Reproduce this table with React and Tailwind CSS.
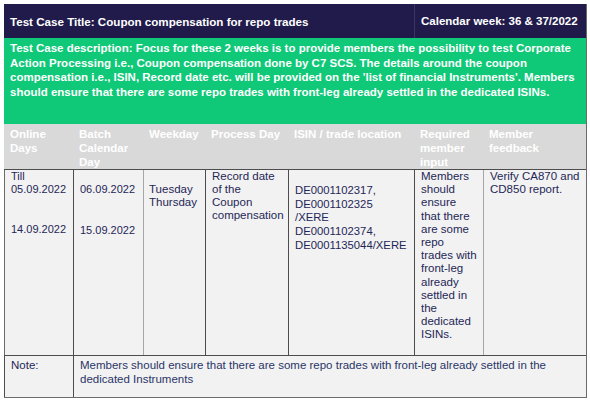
export default function App() {
  const headers = [
    ['Online', 'Days'],
    ['Batch', 'Calendar', 'Day'],
    ['Weekday'],
    ['Process Day'],
    ['ISIN / trade location'],
    ['Required', 'member', 'input'],
    ['Member', 'feedback'],
  ];

  const lines = (arr) => arr.map((l, i) => <div key={i}>{l}</div>);

  return (
    <div
      className="w-[590px] h-[401px] bg-white pt-[4px] pl-[4px]"
      style={{ fontFamily: '"Liberation Sans", Arial, sans-serif' }}
    >
      <div className="w-[583px] border-r border-b border-[#6b6b6b] grid grid-cols-[69px_70px_62px_83px_126px_69px_103px] text-[11.5px]">
        {/* title row */}
        <div className="col-span-5 h-[34px] bg-[#211b4c] text-white font-bold text-[11.6px] flex items-center pl-[6px] pt-[2px]">
          Test Case Title: Coupon compensation for repo trades
        </div>
        <div className="col-span-2 h-[34px] bg-[#211b4c] text-white font-bold text-[11.5px] flex items-center pl-[6px] pt-[2px] border-l border-[#3a3566]">
          Calendar week: 36 &amp; 37/2022
        </div>

        {/* description */}
        <div className="col-span-7 h-[86px] bg-[#0fc878] text-white font-bold text-[11.5px] leading-[14.5px] px-[6px] pt-[3px] whitespace-nowrap">
          {lines([
            'Test Case description: Focus for these 2 weeks is to provide members the possibility to test Corporate',
            'Action Processing i.e., Coupon compensation done by C7 SCS. The details around the coupon',
            "compensation i.e., ISIN, Record date etc. will be provided on the 'list of financial Instruments'. Members",
            'should ensure that there are some repo trades with front-leg already settled in the dedicated ISINs.',
          ])}
        </div>

        {/* header */}
        {headers.map((h) => (
          <div
            key={h.join(' ')}
            className="h-[46px] bg-[#d9d9d9] text-white font-bold leading-[14px] px-[6px] pt-[3px] border-b border-[#4d4d4d] whitespace-nowrap"
          >
            {lines(h)}
          </div>
        ))}

        {/* data row */}
        <div className="h-[185px] bg-[#f2f2f2] text-[#1f2757] text-[11px] leading-[13px] pl-[6px] border-l border-[#6b6b6b]">
          <div>Till</div>
          <div>05.09.2022</div>
          <div className="mt-[27px]">14.09.2022</div>
        </div>
        <div className="h-[185px] bg-[#f2f2f2] text-[#1f2757] text-[11px] leading-[13px] pl-[6px] pt-[13px] border-l border-[#4d4d4d]">
          <div>06.09.2022</div>
          <div className="mt-[28px]">15.09.2022</div>
        </div>
        <div className="h-[185px] bg-[#f2f2f2] text-[#1f2757] leading-[13px] pl-[5px] pt-[13px] border-l border-[#a6a6a6]">
          {lines(['Tuesday', 'Thursday'])}
        </div>
        <div className="h-[185px] bg-[#f2f2f2] text-[#1f2757] leading-[13px] pl-[6px] border-l border-[#4d4d4d] whitespace-nowrap">
          {lines(['Record date', 'of the', 'Coupon', 'compensation'])}
        </div>
        <div className="h-[185px] bg-[#f2f2f2] text-[#1f2757] text-[11.3px] leading-[13.7px] pl-[6px] pt-[14px] border-l border-[#4d4d4d] whitespace-nowrap">
          {lines(['DE0001102317,', 'DE0001102325', '/XERE', 'DE0001102374,', 'DE0001135044/XERE'])}
        </div>
        <div className="h-[185px] bg-[#f2f2f2] text-[#1f2757] leading-[13.2px] pl-[6px] border-l border-[#4d4d4d] whitespace-nowrap">
          {lines([
            'Members',
            'should',
            'ensure',
            'that there',
            'are some',
            'repo',
            'trades with',
            'front-leg',
            'already',
            'settled in',
            'the',
            'dedicated',
            'ISINs.',
          ])}
        </div>
        <div className="h-[185px] bg-[#f2f2f2] text-[#1f2757] leading-[13px] pl-[6px] border-l border-[#a6a6a6] whitespace-nowrap">
          {lines(['Verify CA870 and', 'CD850 report.'])}
        </div>

        {/* note row */}
        <div className="h-[42px] bg-[#f2f2f2] text-[#1f2757] leading-[14px] pl-[6px] pt-[2px] border-l border-t border-[#4d4d4d]">
          Note:
        </div>
        <div className="col-span-6 h-[42px] bg-[#f2f2f2] text-[#2a3568] leading-[14px] pl-[6px] pt-[2px] border-l border-t border-[#4d4d4d] whitespace-nowrap">
          {lines([
            'Members should ensure that there are some repo trades with front-leg already settled in the',
            'dedicated Instruments',
          ])}
        </div>
      </div>
    </div>
  );
}
